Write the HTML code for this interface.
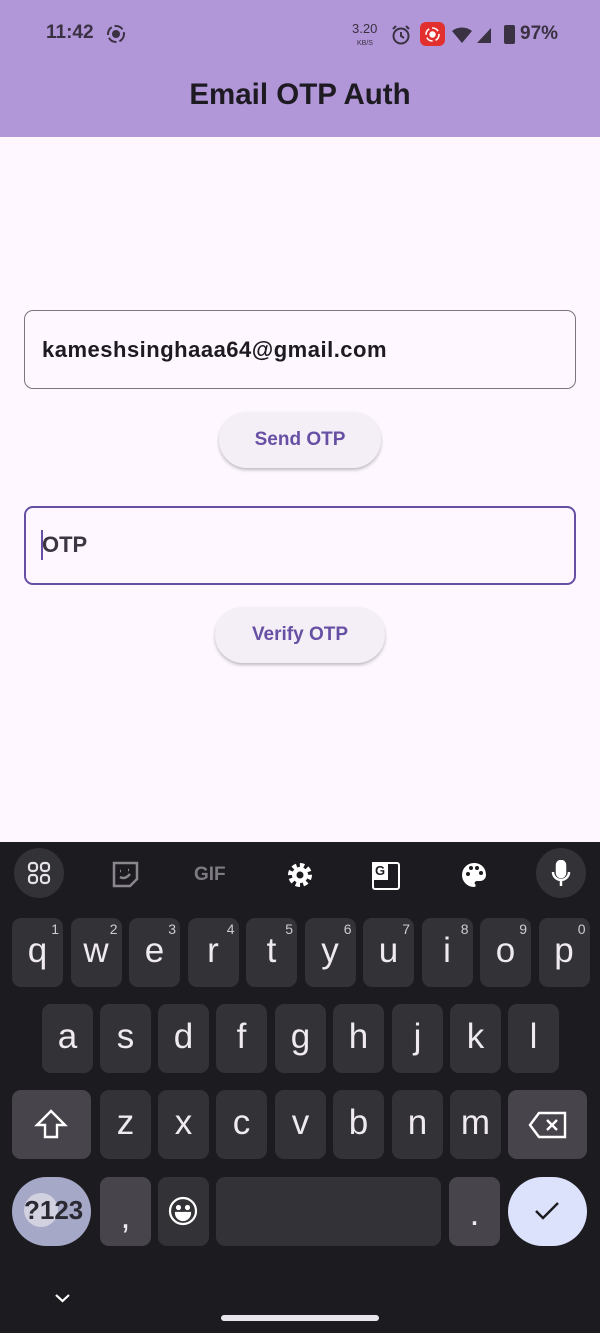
<!DOCTYPE html>
<html><head><meta charset="utf-8"><style>
*{margin:0;padding:0;box-sizing:border-box}
body{width:600px;height:1333px;background:#fef7ff;font-family:"Liberation Sans",sans-serif;position:relative;overflow:hidden}
.a{position:absolute}
.bar{left:0;top:0;width:600px;height:137px;background:#b197d8}
.field{left:24px;width:552px;height:79px;border-radius:9px}
.btn{border-radius:28px;background:#f4eff7;box-shadow:0 2px 3px rgba(0,0,0,.25);color:#6750a4;font-weight:bold;font-size:19px;text-align:center;line-height:56px}
.kb{left:0;top:842px;width:600px;height:491px;background:#1c1b20}
.k{position:absolute;width:51px;height:69px;border-radius:9px;background:#333237;color:#eeeaf0;font-size:35px;text-align:center;line-height:66px}
.k sup{position:absolute;right:4px;top:4px;font-size:14px;line-height:14px;color:#cfcbd3}
</style></head><body>
<div class="a bar"></div>
<div class="a" style="left:46px;top:22px;font-size:19px;font-weight:bold;color:#3a3142">11:42</div>
<svg class="a" style="left:106px;top:24px" width="20" height="20"><circle cx="10" cy="10" r="8" fill="none" stroke="#3a3142" stroke-width="2" stroke-dasharray="9 3"/><circle cx="10" cy="10" r="4" fill="#3a3142"/></svg>
<div class="a" style="left:352px;top:23px;font-size:13px;color:#3a3142;line-height:12px">3.20<br><span style="font-size:7px;margin-left:5px">KB/S</span></div>
<svg class="a" style="left:390px;top:24px" width="22" height="22"><circle cx="11" cy="12" r="7.5" fill="none" stroke="#3a3142" stroke-width="2"/><path d="M11 8v4l3 2M3 5l3-3M19 5l-3-3" stroke="#3a3142" stroke-width="2" fill="none"/></svg>
<div class="a" style="left:420px;top:22px;width:25px;height:24px;border-radius:6px;background:#e2302f"></div>
<svg class="a" style="left:423px;top:25px" width="19" height="19"><circle cx="9.5" cy="9.5" r="6.5" fill="none" stroke="#fff" stroke-width="1.6" stroke-dasharray="7 3"/><circle cx="9.5" cy="9.5" r="3.2" fill="#fff"/></svg>
<svg class="a" style="left:451px;top:25px" width="44" height="20"><path d="M1 6a16 16 0 0 1 20 0L11 18z" fill="#3a3142"/><path d="M26 18L40 3v15z" fill="#3a3142"/></svg>
<div class="a" style="left:504px;top:25px;width:11px;height:19px;background:#3a3142;border-radius:2px"></div>
<div class="a" style="left:520px;top:23px;font-size:19px;font-weight:bold;color:#3a3142">97%</div>
<div class="a" style="left:0;top:78px;width:600px;text-align:center;font-size:29.5px;font-weight:bold;color:#1d1a22">Email OTP Auth</div>

<div class="a field" style="top:310px;border:1.3px solid #7a757f"></div>
<div class="a" style="left:42px;top:337px;font-size:22px;font-weight:bold;color:#1d1a22;letter-spacing:.5px">kameshsinghaaa64@gmail.com</div>
<div class="a btn" style="left:219px;top:412px;width:162px">Send OTP</div>
<div class="a field" style="top:506px;border:2.5px solid #6750a4"></div>
<div class="a" style="left:41px;top:530px;width:2px;height:30px;background:#6750a4"></div>
<div class="a" style="left:42px;top:532px;font-size:22px;font-weight:bold;color:#3b3642">OTP</div>
<div class="a btn" style="left:215px;top:607px;width:170px">Verify OTP</div>

<div class="a kb"></div>
<div class="a" style="left:14px;top:848px;width:50px;height:50px;border-radius:25px;background:#333237"></div>
<svg class="a" style="left:27px;top:861px" width="24" height="24" fill="none" stroke="#e6e1e9" stroke-width="2.2"><rect x="2" y="2" width="8" height="8" rx="3"/><rect x="14" y="2" width="8" height="8" rx="3"/><rect x="2" y="14" width="8" height="8" rx="3"/><rect x="14" y="14" width="8" height="8" rx="3"/></svg>
<svg class="a" style="left:111px;top:860px" width="30" height="30" fill="none" stroke="#8a868e" stroke-width="2.5"><path d="M3 3h23v16l-7 7H3z"/><path d="M9 11h1M17 10h1M9 17q5 3 10-3"/></svg>
<div class="a" style="left:194px;top:864px;font-size:19px;font-weight:bold;color:#7d7a81">GIF</div>
<svg class="a" style="left:286px;top:861px" width="28" height="28"><circle cx="14" cy="14" r="9" fill="none" stroke="#fff" stroke-width="6" stroke-dasharray="4 3"/><circle cx="14" cy="14" r="8" fill="#fff"/><circle cx="14" cy="14" r="3.5" fill="#1c1b20"/></svg>
<div class="a" style="left:372px;top:862px;width:28px;height:28px;border:2px solid #fff;border-radius:3px;background:#1c1b20"></div>
<div class="a" style="left:372px;top:862px;width:16px;height:18px;background:#fff;color:#1c1b20;font-size:13px;font-weight:bold;text-align:center;line-height:18px">G</div>
<svg class="a" style="left:459px;top:860px" width="30" height="30"><path d="M15 3a12 12 0 0 0 0 24c2 0 2-2 1-3s0-3 2-3h3a6 6 0 0 0 6-6C27 8 22 3 15 3z" fill="#fff"/><circle cx="9" cy="14" r="2" fill="#1c1b20"/><circle cx="12" cy="8" r="2" fill="#1c1b20"/><circle cx="18" cy="8" r="2" fill="#1c1b20"/><circle cx="22" cy="13" r="2" fill="#1c1b20"/></svg>
<div class="a" style="left:536px;top:848px;width:50px;height:50px;border-radius:25px;background:#333237"></div>
<svg class="a" style="left:549px;top:860px" width="24" height="28" fill="none" stroke="#fff" stroke-width="2.5"><rect x="8" y="1" width="8" height="16" rx="4" fill="#fff"/><path d="M4 12a8 8 0 0 0 16 0M12 20v6"/></svg>

<div class="k" style="left:12px;top:918px">q<sup>1</sup></div>
<div class="k" style="left:70.5px;top:918px">w<sup>2</sup></div>
<div class="k" style="left:129px;top:918px">e<sup>3</sup></div>
<div class="k" style="left:187.5px;top:918px">r<sup>4</sup></div>
<div class="k" style="left:246px;top:918px">t<sup>5</sup></div>
<div class="k" style="left:304.5px;top:918px">y<sup>6</sup></div>
<div class="k" style="left:363px;top:918px">u<sup>7</sup></div>
<div class="k" style="left:421.5px;top:918px">i<sup>8</sup></div>
<div class="k" style="left:480px;top:918px">o<sup>9</sup></div>
<div class="k" style="left:538.5px;top:918px">p<sup>0</sup></div>

<div class="k" style="left:42px;top:1004px">a</div>
<div class="k" style="left:100px;top:1004px">s</div>
<div class="k" style="left:158px;top:1004px">d</div>
<div class="k" style="left:216px;top:1004px">f</div>
<div class="k" style="left:275px;top:1004px">g</div>
<div class="k" style="left:333px;top:1004px">h</div>
<div class="k" style="left:392px;top:1004px">j</div>
<div class="k" style="left:450px;top:1004px">k</div>
<div class="k" style="left:508px;top:1004px">l</div>

<div class="k" style="left:12px;top:1090px;width:79px;background:#47454b"></div>
<svg class="a" style="left:34px;top:1108px" width="34" height="34" fill="none" stroke="#fff" stroke-width="2.4"><path d="M17 3L3 17h8v12h12V17h8z"/></svg>
<div class="k" style="left:100px;top:1090px">z</div>
<div class="k" style="left:158px;top:1090px">x</div>
<div class="k" style="left:216px;top:1090px">c</div>
<div class="k" style="left:275px;top:1090px">v</div>
<div class="k" style="left:333px;top:1090px">b</div>
<div class="k" style="left:392px;top:1090px">n</div>
<div class="k" style="left:450px;top:1090px">m</div>
<div class="k" style="left:508px;top:1090px;width:79px;background:#47454b"></div>
<svg class="a" style="left:528px;top:1110px" width="40" height="30" fill="none" stroke="#fff" stroke-width="2.4"><path d="M11 3h26v24H11L2 15z"/><path d="M19 10l10 10M29 10L19 20"/></svg>

<div class="a" style="left:12px;top:1177px;width:79px;height:69px;border-radius:35px;background:#a6a8c8"></div>
<div class="a" style="left:24px;top:1193px;width:34px;height:34px;border-radius:17px;background:#dcdbe6;opacity:.8"></div>
<div class="a" style="left:24px;top:1195px;font-size:26px;font-weight:bold;color:#2a2830">?123</div>
<div class="k" style="left:100px;top:1177px;background:#47454b;line-height:80px">,</div>
<div class="k" style="left:158px;top:1177px"></div>
<svg class="a" style="left:168px;top:1196px" width="30" height="30" fill="none" stroke="#fff" stroke-width="2.2"><circle cx="15" cy="15" r="13"/><circle cx="10.5" cy="11.5" r="1.5" fill="#fff"/><circle cx="19.5" cy="11.5" r="1.5" fill="#fff"/><path d="M8 17h14a7 7 0 0 1-14 0z" fill="#fff"/></svg>
<div class="k" style="left:216px;top:1177px;width:225px"></div>
<div class="k" style="left:449px;top:1177px;background:#47454b;line-height:74px">.</div>
<div class="a" style="left:508px;top:1177px;width:79px;height:69px;border-radius:35px;background:#dce1fc"></div>
<svg class="a" style="left:533px;top:1198px" width="28" height="26" fill="none" stroke="#1c1b20" stroke-width="2.4"><path d="M3 13l7 7L25 5"/></svg>
<svg class="a" style="left:54px;top:1292px" width="17" height="12" fill="none" stroke="#fff" stroke-width="2.2"><path d="M2 3l6.5 6L15 3"/></svg>
<div class="a" style="left:221px;top:1315px;width:158px;height:6px;border-radius:3px;background:#e8e6ec"></div>
</body></html>
